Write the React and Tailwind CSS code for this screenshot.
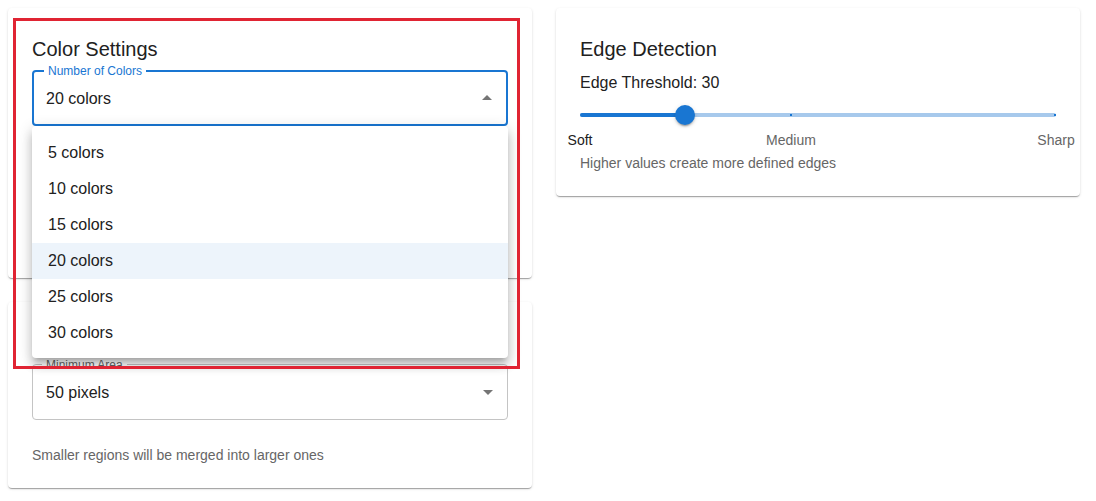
import React from "react"

const font = { fontFamily: '"Liberation Sans", Arial, sans-serif' }

function Arrow({ up }) {
  return (
    <svg width="24" height="24" viewBox="0 0 24 24" className={`absolute right-[7px] top-1/2 -translate-y-1/2 ${up ? "rotate-180" : ""}`}>
      <path d="M7 10l5 5 5-5z" fill="rgba(0,0,0,0.54)" />
    </svg>
  )
}

function Card({ children, className = "" }) {
  return (
    <div className={`bg-white rounded-[4px] px-6 pt-[25px] pb-[23px] shadow-[0_2px_1px_-1px_rgba(0,0,0,0.2),0_1px_1px_0_rgba(0,0,0,0.14),0_1px_3px_0_rgba(0,0,0,0.12)] ${className}`}>
      {children}
    </div>
  )
}

const options = [5, 10, 15, 20, 25, 30]

export default function App() {
  return (
    <div style={font} className="relative min-h-[501px] bg-white p-2 text-[#212121]">
      <div className="grid grid-cols-[524px_524px] gap-6 items-start">
        {/* Left column */}
        <div className="flex flex-col gap-6">
          <Card className="h-[270px]">
            <h2 className="text-[20px] leading-8">Color Settings</h2>
            <div className="relative mt-[5px] h-14 rounded-[4px] border-2 border-[#1976d2]">
              <span className="absolute -top-[9px] left-[10px] bg-white px-[4px] text-[12px] leading-4 text-[#1976d2]">
                Number of Colors
              </span>
              <div className="flex h-full items-center pl-[12px] pt-px text-[16px]">20 colors</div>
              <Arrow up />
              {/* Open menu */}
              <div className="absolute left-[-2px] right-[-2px] top-[54px] z-20 rounded-[4px] bg-white pt-[9px] pb-[7px] shadow-[0_5px_5px_-3px_rgba(0,0,0,0.2),0_8px_10px_1px_rgba(0,0,0,0.14),0_3px_14px_2px_rgba(0,0,0,0.12)]">
                {options.map((n) => (
                  <div
                    key={n}
                    className={`flex h-9 items-center px-4 text-[16px] ${n === 20 ? "bg-[#edf4fb]" : ""}`}
                  >
                    {n} colors
                  </div>
                ))}
              </div>
            </div>
          </Card>

          <Card>
            <h2 className="text-[20px] leading-8">Region Settings</h2>
            <div className="relative mt-[5px] h-14 rounded-[4px] border border-[#c4c4c4]">
              <span className="absolute -top-[8px] left-[9px] bg-white px-[4px] text-[12px] leading-4 text-[#666]">
                Minimum Area
              </span>
              <div className="flex h-full items-center pl-[13px] pt-px text-[16px]">50 pixels</div>
              <Arrow />
            </div>
            <p className="mt-[25px] text-[14px] leading-5 text-[#666]">Smaller regions will be merged into larger ones</p>
          </Card>
        </div>

        {/* Right column */}
        <Card>
          <h2 className="text-[20px] leading-8">Edge Detection</h2>
          <p className="mt-[6px] text-[16px] leading-6">Edge Threshold: 30</p>
          <div className="relative h-[58px]">
            <div className="absolute left-0 right-0 top-[18px] h-1 rounded-full bg-[#a7c9ec]" />
            <div className="absolute left-0 top-[18px] h-1 w-[105px] rounded-full bg-[#1976d2]" />
            <div className="absolute left-[210px] top-[19px] h-[2px] w-[2px] bg-[#1976d2]" />
            <div className="absolute right-0 top-[19px] h-[2px] w-[2px] bg-[#1976d2]" />
            <div className="absolute left-[95px] top-[10px] h-5 w-5 rounded-full bg-[#1976d2] shadow-[0_3px_1px_-2px_rgba(0,0,0,0.2),0_2px_2px_0_rgba(0,0,0,0.14),0_1px_5px_0_rgba(0,0,0,0.12)]" />
            <span className="absolute left-0 top-[35px] -translate-x-1/2 text-[14px] leading-5">Soft</span>
            <span className="absolute left-[211px] top-[35px] -translate-x-1/2 text-[14px] leading-5 text-[#666]">Medium</span>
            <span className="absolute left-full top-[35px] -translate-x-1/2 text-[14px] leading-5 text-[#666]">Sharp</span>
          </div>
          <p className="text-[14px] leading-5 text-[#666]">Higher values create more defined edges</p>
        </Card>
      </div>

      {/* Annotation box */}
      <div className="pointer-events-none absolute left-[13px] top-[18px] z-30 h-[351px] w-[507px] border-[3px] border-[#e02433]" />
    </div>
  )
}
